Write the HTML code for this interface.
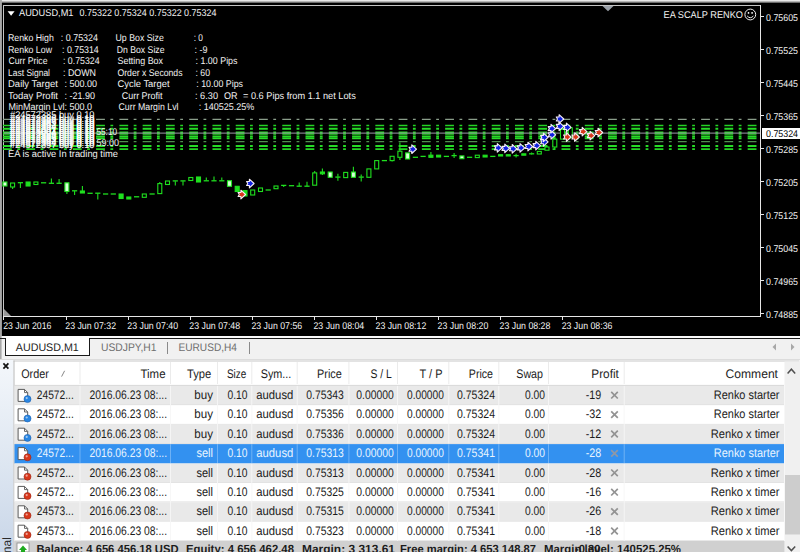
<!DOCTYPE html>
<html lang="en"><head><meta charset="utf-8"><title>AUDUSD,M1 - EA Scalp Renko</title>
<style>
html,body{margin:0;padding:0;background:#f0f0f0;}
body{width:800px;height:552px;overflow:hidden;position:relative;font-family:"Liberation Sans", sans-serif;}
svg text{white-space:pre;text-rendering:geometricPrecision;}
</style></head><body>
<svg width="800" height="552" viewBox="0 0 800 552" style="position:absolute;left:0;top:0;font-family:'Liberation Sans', sans-serif">
<rect x="0" y="0" width="800" height="552" fill="#f0f0f0"/>
<rect x="0" y="0" width="800" height="336" fill="#000"/>
<rect x="0" y="0" width="800" height="2.6" fill="#b4b4b4"/>
<rect x="0" y="0" width="800" height="1" fill="#e8e8e8"/>
<rect x="0" y="0" width="1.8" height="360" fill="#a8a8a8"/>
<g fill="#e6e6e6" shape-rendering="crispEdges">
<rect x="3" y="5" width="758" height="1" fill="#c4c4c4"/>
<rect x="3" y="5" width="1" height="311" fill="#c4c4c4"/>
<rect x="760" y="5" width="1" height="312"/>
<rect x="3" y="316" width="758" height="1"/>
<rect x="761" y="16" width="3" height="1"/>
<rect x="761" y="49" width="3" height="1"/>
<rect x="761" y="82" width="3" height="1"/>
<rect x="761" y="115" width="3" height="1"/>
<rect x="761" y="148" width="3" height="1"/>
<rect x="761" y="181" width="3" height="1"/>
<rect x="761" y="214" width="3" height="1"/>
<rect x="761" y="247" width="3" height="1"/>
<rect x="761" y="280" width="3" height="1"/>
<rect x="761" y="313" width="3" height="1"/>
<rect x="3" y="317" width="1" height="3"/>
<rect x="66" y="317" width="1" height="3"/>
<rect x="128" y="317" width="1" height="3"/>
<rect x="190" y="317" width="1" height="3"/>
<rect x="252" y="317" width="1" height="3"/>
<rect x="314" y="317" width="1" height="3"/>
<rect x="376" y="317" width="1" height="3"/>
<rect x="438" y="317" width="1" height="3"/>
<rect x="500" y="317" width="1" height="3"/>
<rect x="562" y="317" width="1" height="3"/>
</g>
<polygon points="4,309 4,316 11,316" fill="#9a9a9a"/>
<polygon points="602.5,6 613.5,6 608,11.2" fill="#9aa0a8"/>
<g fill="none" stroke-dasharray="8.8 5.5 2.8 6.17">
<path d="M3.03 119.4H760" stroke="#8a9e8a" stroke-width="1.1"/>
<path d="M3.03 125.5H760" stroke="#24d424" stroke-width="1.5"/>
<path d="M3.03 128.7H760" stroke="#26dc26" stroke-width="1.9"/>
<path d="M3.03 132.3H760" stroke="#26dc26" stroke-width="1.7"/>
<path d="M3.03 134.0H760" stroke="#26dc26" stroke-width="1.3"/>
<path d="M3.03 136.5H760" stroke="#26dc26" stroke-width="1.8"/>
<path d="M3.03 138.3H760" stroke="#26dc26" stroke-width="1.7"/>
<path d="M3.03 141.7H760" stroke="#4f8f4f" stroke-width="1.2"/>
<path d="M3.03 146.0H760" stroke="#26dc26" stroke-width="2.0"/>
<path d="M3.03 149.2H760" stroke="#24d424" stroke-width="1.8"/>
</g>
<rect x="4" y="132.6" width="756" height="1" fill="#9c9ca8"/>
<g stroke="#1fe01f" stroke-width="1.1" fill="none">
<rect x="2.9" y="182" width="4" height="4.0" fill="#d8ffd8"/>
<path d="M12.6 187V189"/>
<rect x="10.6" y="183" width="4" height="4.0" fill="#000"/>
<path d="M20.4 183V188"/>
<path d="M17.8 182.7H23.0" stroke-width="1.3"/>
<rect x="26.1" y="182" width="4" height="4.0" fill="#1fe01f"/>
<rect x="33.9" y="182" width="4" height="2.5" fill="#000"/>
<path d="M41.0 182.8H46.2" stroke-width="1.3"/>
<path d="M51.4 178.4V183"/>
<path d="M48.8 183.3H54.0" stroke-width="1.3"/>
<path d="M59.1 179V183"/>
<path d="M56.5 183.3H61.7" stroke-width="1.3"/>
<path d="M66.9 191.5V194"/>
<rect x="64.9" y="182.8" width="4" height="8.7" fill="#d8ffd8"/>
<path d="M74.6 191V195"/>
<path d="M72.0 190.8H77.2" stroke-width="1.3"/>
<path d="M82.4 186V191"/>
<rect x="80.4" y="191" width="4" height="2.0" fill="#1fe01f"/>
<path d="M87.5 193.3H92.7" stroke-width="1.3"/>
<path d="M97.8 193.5V199.4"/>
<path d="M95.2 193.2H100.4" stroke-width="1.3"/>
<path d="M103.0 194.0H108.2" stroke-width="1.3"/>
<path d="M110.7 194.0H115.9" stroke-width="1.3"/>
<rect x="119.1" y="194" width="4" height="4.5" fill="#1fe01f"/>
<rect x="126.8" y="197" width="4" height="2.0" fill="#1fe01f"/>
<path d="M134.0 196.8H139.2" stroke-width="1.3"/>
<rect x="142.3" y="194" width="4" height="3.3" fill="#000"/>
<path d="M149.5 194.0H154.7" stroke-width="1.3"/>
<path d="M159.8 182V183.6"/>
<rect x="157.8" y="183.6" width="4" height="10.0" fill="#000"/>
<rect x="165.5" y="181" width="4" height="3.5" fill="#000"/>
<path d="M175.3 181.2V185.4"/>
<path d="M172.7 180.9H177.9" stroke-width="1.3"/>
<path d="M183.0 181.2V185.4"/>
<path d="M180.4 180.9H185.6" stroke-width="1.3"/>
<rect x="188.8" y="177.5" width="4" height="3.0" fill="#000"/>
<rect x="196.5" y="177" width="4" height="5.0" fill="#1fe01f"/>
<path d="M206.3 177.5V180.6"/>
<path d="M203.7 180.8H208.9" stroke-width="1.3"/>
<path d="M214.0 176.6V180.6"/>
<path d="M211.4 180.8H216.6" stroke-width="1.3"/>
<path d="M221.8 177.5V180.6"/>
<path d="M219.2 180.8H224.4" stroke-width="1.3"/>
<rect x="227.5" y="180.7" width="4" height="5.6" fill="#d8ffd8"/>
<rect x="235.2" y="186.3" width="4" height="5.2" fill="#1fe01f"/>
<rect x="243.0" y="190.6" width="4" height="5.4" fill="#1fe01f"/>
<rect x="250.7" y="190" width="4" height="5.0" fill="#000"/>
<rect x="258.5" y="188" width="4" height="3.5" fill="#000"/>
<path d="M265.6 190.0H270.8" stroke-width="1.3"/>
<rect x="274.0" y="186" width="4" height="2.7" fill="#000"/>
<path d="M283.7 185.7V187"/>
<path d="M281.1 185.4H286.3" stroke-width="1.3"/>
<path d="M288.9 185.7H294.1" stroke-width="1.3"/>
<path d="M299.2 182.5V186"/>
<path d="M296.6 186.2H301.8" stroke-width="1.3"/>
<path d="M307.0 181.7V186"/>
<path d="M304.4 186.2H309.6" stroke-width="1.3"/>
<path d="M314.7 171V172.9"/>
<rect x="312.7" y="172.9" width="4" height="12.3" fill="#000"/>
<path d="M322.4 168.5V172"/>
<path d="M322.4 173.8V175"/>
<rect x="320.4" y="172" width="4" height="1.8" fill="#1fe01f"/>
<rect x="328.2" y="172" width="4" height="5.3" fill="#d8ffd8"/>
<path d="M337.9 173.8V176.8"/>
<path d="M337.9 177.3V180.8"/>
<path d="M335.3 177.1H340.5" stroke-width="1.3"/>
<rect x="343.7" y="172.4" width="4" height="5.2" fill="#000"/>
<path d="M353.4 166.8V172"/>
<rect x="351.4" y="172" width="4" height="5.3" fill="#d8ffd8"/>
<path d="M361.2 174.6V176.8"/>
<path d="M361.2 177.3V181.6"/>
<path d="M358.6 177.1H363.8" stroke-width="1.3"/>
<rect x="366.9" y="168.9" width="4" height="8.4" fill="#000"/>
<rect x="374.7" y="160.6" width="4" height="8.3" fill="#000"/>
<path d="M381.8 160.6H387.0" stroke-width="1.3"/>
<path d="M392.1 160.6V161.5"/>
<rect x="390.1" y="156.3" width="4" height="4.3" fill="#000"/>
<path d="M399.9 142.4V151.2"/>
<path d="M399.9 157.3V160"/>
<rect x="397.9" y="151.2" width="4" height="6.1" fill="#000"/>
<rect x="405.6" y="152.9" width="4" height="6.1" fill="#d8ffd8"/>
<path d="M412.8 157.3H418.0" stroke-width="1.3"/>
<path d="M420.5 156.4H425.7" stroke-width="1.3"/>
<path d="M430.9 152V155.2"/>
<rect x="428.9" y="155.2" width="4" height="2.1" fill="#1fe01f"/>
<rect x="436.6" y="155.2" width="4" height="1.8" fill="#1fe01f"/>
<path d="M443.8 156.4H449.0" stroke-width="1.3"/>
<path d="M454.1 152.9V155.3"/>
<path d="M454.1 155.8V158"/>
<path d="M451.5 155.6H456.7" stroke-width="1.3"/>
<rect x="459.9" y="155.9" width="4" height="2.8" fill="#d8ffd8"/>
<path d="M467.0 157.3H472.2" stroke-width="1.3"/>
<rect x="475.3" y="155.2" width="4" height="2.4" fill="#000"/>
<rect x="483.1" y="155.2" width="4" height="1.8" fill="#1fe01f"/>
<path d="M490.2 156.4H495.4" stroke-width="1.3"/>
<rect x="498.6" y="154.7" width="4" height="1.3" fill="#1fe01f"/>
<rect x="506.3" y="154.7" width="4" height="1.3" fill="#1fe01f"/>
<path d="M516.1 153.8V155.3"/>
<path d="M516.1 155.8V157.6"/>
<path d="M513.5 155.6H518.7" stroke-width="1.3"/>
<rect x="521.8" y="153.8" width="4" height="1.4" fill="#1fe01f"/>
<path d="M531.6 152.5V153.5"/>
<path d="M531.6 154V154.6"/>
<path d="M529.0 153.8H534.2" stroke-width="1.3"/>
<rect x="537.3" y="151.4" width="4" height="2.6" fill="#000"/>
<path d="M547.0 145.3V147"/>
<rect x="545.0" y="147" width="4" height="3.2" fill="#000"/>
<path d="M554.8 136.5V139.1"/>
<path d="M554.8 147V149.7"/>
<rect x="552.8" y="139.1" width="4" height="7.9" fill="#000"/>
<path d="M562.5 126V129.5"/>
<rect x="560.5" y="129.5" width="4" height="9.6" fill="#000"/>
<rect x="568.3" y="127.8" width="4" height="9.6" fill="#000"/>
</g>
<polygon points="238.1,192.5 240.9,192.5 240.9,190.2 245.6,194.5 240.9,198.8 240.9,196.5 238.1,196.5 239.3,194.5" fill="#d8381c" stroke="#f6eef6" stroke-width="1.1" stroke-linejoin="round"/>
<polygon points="246.6,181.5 249.4,181.5 249.4,179.2 254.1,183.5 249.4,187.8 249.4,185.5 246.6,185.5 247.8,183.5" fill="#1020e0" stroke="#f6eef6" stroke-width="1.1" stroke-linejoin="round"/>
<polygon points="409.0,147.2 411.8,147.2 411.8,144.9 416.5,149.2 411.8,153.5 411.8,151.2 409.0,151.2 410.2,149.2" fill="#1020e0" stroke="#f6eef6" stroke-width="1.1" stroke-linejoin="round"/>
<polygon points="494.5,145.9 497.3,145.9 497.3,143.6 502.0,147.9 497.3,152.2 497.3,149.9 494.5,149.9 495.7,147.9" fill="#1020e0" stroke="#f6eef6" stroke-width="1.1" stroke-linejoin="round"/>
<polygon points="502.0,146.4 504.8,146.4 504.8,144.1 509.5,148.4 504.8,152.7 504.8,150.4 502.0,150.4 503.2,148.4" fill="#1020e0" stroke="#f6eef6" stroke-width="1.1" stroke-linejoin="round"/>
<polygon points="509.4,146.8 512.2,146.8 512.2,144.5 516.9,148.8 512.2,153.1 512.2,150.8 509.4,150.8 510.6,148.8" fill="#1020e0" stroke="#f6eef6" stroke-width="1.1" stroke-linejoin="round"/>
<polygon points="517.2,145.9 520.0,145.9 520.0,143.6 524.7,147.9 520.0,152.2 520.0,149.9 517.2,149.9 518.4,147.9" fill="#1020e0" stroke="#f6eef6" stroke-width="1.1" stroke-linejoin="round"/>
<polygon points="525.1,144.5 527.9,144.5 527.9,142.2 532.6,146.5 527.9,150.8 527.9,148.5 525.1,148.5 526.3,146.5" fill="#1020e0" stroke="#f6eef6" stroke-width="1.1" stroke-linejoin="round"/>
<polygon points="533.0,143.6 535.8,143.6 535.8,141.3 540.5,145.6 535.8,149.9 535.8,147.6 533.0,147.6 534.2,145.6" fill="#1020e0" stroke="#f6eef6" stroke-width="1.1" stroke-linejoin="round"/>
<polygon points="540.6,139.8 543.4,139.8 543.4,137.5 548.1,141.8 543.4,146.1 543.4,143.8 540.6,143.8 541.8,141.8" fill="#1020e0" stroke="#f6eef6" stroke-width="1.1" stroke-linejoin="round"/>
<polygon points="540.6,135.4 543.4,135.4 543.4,133.1 548.1,137.4 543.4,141.7 543.4,139.4 540.6,139.4 541.8,137.4" fill="#1020e0" stroke="#f6eef6" stroke-width="1.1" stroke-linejoin="round"/>
<polygon points="548.2,132.8 551.0,132.8 551.0,130.5 555.7,134.8 551.0,139.1 551.0,136.8 548.2,136.8 549.4,134.8" fill="#1020e0" stroke="#f6eef6" stroke-width="1.1" stroke-linejoin="round"/>
<polygon points="548.2,126.6 551.0,126.6 551.0,124.3 555.7,128.6 551.0,132.9 551.0,130.6 548.2,130.6 549.4,128.6" fill="#1020e0" stroke="#f6eef6" stroke-width="1.1" stroke-linejoin="round"/>
<polygon points="556.3,124.4 559.1,124.4 559.1,122.1 563.8,126.4 559.1,130.7 559.1,128.4 556.3,128.4 557.5,126.4" fill="#1020e0" stroke="#f6eef6" stroke-width="1.1" stroke-linejoin="round"/>
<polygon points="556.3,117.0 559.1,117.0 559.1,114.7 563.8,119.0 559.1,123.3 559.1,121.0 556.3,121.0 557.5,119.0" fill="#1020e0" stroke="#f6eef6" stroke-width="1.1" stroke-linejoin="round"/>
<polygon points="563.6,125.4 566.4,125.4 566.4,123.1 571.1,127.4 566.4,131.7 566.4,129.4 563.6,129.4 564.8,127.4" fill="#1020e0" stroke="#f6eef6" stroke-width="1.1" stroke-linejoin="round"/>
<polygon points="563.6,135.0 566.4,135.0 566.4,132.7 571.1,137.0 566.4,141.3 566.4,139.0 563.6,139.0 564.8,137.0" fill="#d8381c" stroke="#f6eef6" stroke-width="1.1" stroke-linejoin="round"/>
<polygon points="571.9,135.0 574.7,135.0 574.7,132.7 579.4,137.0 574.7,141.3 574.7,139.0 571.9,139.0 573.1,137.0" fill="#d8381c" stroke="#f6eef6" stroke-width="1.1" stroke-linejoin="round"/>
<polygon points="579.4,129.6 582.2,129.6 582.2,127.3 586.9,131.6 582.2,135.9 582.2,133.6 579.4,133.6 580.6,131.6" fill="#d8381c" stroke="#f6eef6" stroke-width="1.1" stroke-linejoin="round"/>
<polygon points="587.3,133.6 590.1,133.6 590.1,131.3 594.8,135.6 590.1,139.9 590.1,137.6 587.3,137.6 588.5,135.6" fill="#d8381c" stroke="#f6eef6" stroke-width="1.1" stroke-linejoin="round"/>
<polygon points="595.2,130.5 598.0,130.5 598.0,128.2 602.7,132.5 598.0,136.8 598.0,134.5 595.2,134.5 596.4,132.5" fill="#d8381c" stroke="#f6eef6" stroke-width="1.1" stroke-linejoin="round"/>
<polygon points="7.6,11.2 14.6,11.2 11.1,15.7" fill="#fff"/>
<text x="19.00" y="16" font-size="9.8" fill="#f2f2f2" textLength="54.50" lengthAdjust="spacingAndGlyphs" xml:space="preserve">AUDUSD,M1</text>
<text x="79.50" y="16" font-size="9.8" fill="#f2f2f2" textLength="137.00" lengthAdjust="spacingAndGlyphs" xml:space="preserve">0.75322 0.75324 0.75322 0.75324</text>
<text x="663.50" y="18" font-size="9.8" fill="#f2f2f2" textLength="79.50" lengthAdjust="spacingAndGlyphs" xml:space="preserve">EA SCALP RENKO</text>
<g fill="none" stroke="#f2f2f2" stroke-width="1"><circle cx="750.3" cy="14.5" r="5.4"/><path d="M747.2 16Q750.3 19.4 753.4 16"/></g>
<rect x="747.8" y="12" width="1.4" height="1.8" fill="#f2f2f2"/><rect x="751.4" y="12" width="1.4" height="1.8" fill="#f2f2f2"/>
<text x="8.00" y="41" font-size="9.8" fill="#f2f2f2" textLength="45.80" lengthAdjust="spacingAndGlyphs" xml:space="preserve">Renko High</text>
<text x="60.75" y="41" font-size="9.8" fill="#f2f2f2" textLength="37.25" lengthAdjust="spacingAndGlyphs" xml:space="preserve">: 0.75324</text>
<text x="115.50" y="41" font-size="9.8" fill="#f2f2f2" textLength="48.30" lengthAdjust="spacingAndGlyphs" xml:space="preserve">Up Box Size</text>
<text x="193.75" y="41" font-size="9.8" fill="#f2f2f2" textLength="9.25" lengthAdjust="spacingAndGlyphs" xml:space="preserve">: 0</text>
<text x="8.00" y="53" font-size="9.8" fill="#f2f2f2" textLength="44.00" lengthAdjust="spacingAndGlyphs" xml:space="preserve">Renko Low</text>
<text x="62.00" y="53" font-size="9.8" fill="#f2f2f2" textLength="36.75" lengthAdjust="spacingAndGlyphs" xml:space="preserve">: 0.75314</text>
<text x="116.75" y="53" font-size="9.8" fill="#f2f2f2" textLength="47.75" lengthAdjust="spacingAndGlyphs" xml:space="preserve">Dn Box Size</text>
<text x="194.50" y="53" font-size="9.8" fill="#f2f2f2" textLength="13.00" lengthAdjust="spacingAndGlyphs" xml:space="preserve">: -9</text>
<text x="8.50" y="64" font-size="9.8" fill="#f2f2f2" textLength="39.00" lengthAdjust="spacingAndGlyphs" xml:space="preserve">Curr Price</text>
<text x="63.00" y="64" font-size="9.8" fill="#f2f2f2" textLength="36.50" lengthAdjust="spacingAndGlyphs" xml:space="preserve">: 0.75324</text>
<text x="117.50" y="64" font-size="9.8" fill="#f2f2f2" textLength="45.50" lengthAdjust="spacingAndGlyphs" xml:space="preserve">Setting Box</text>
<text x="195.50" y="64" font-size="9.8" fill="#f2f2f2" textLength="42.00" lengthAdjust="spacingAndGlyphs" xml:space="preserve">: 1.00 Pips</text>
<text x="8.00" y="76" font-size="9.8" fill="#f2f2f2" textLength="42.00" lengthAdjust="spacingAndGlyphs" xml:space="preserve">Last Signal</text>
<text x="63.00" y="76" font-size="9.8" fill="#f2f2f2" textLength="33.00" lengthAdjust="spacingAndGlyphs" xml:space="preserve">: DOWN</text>
<text x="117.50" y="76" font-size="9.8" fill="#f2f2f2" textLength="65.00" lengthAdjust="spacingAndGlyphs" xml:space="preserve">Order x Seconds</text>
<text x="195.50" y="76" font-size="9.8" fill="#f2f2f2" textLength="14.50" lengthAdjust="spacingAndGlyphs" xml:space="preserve">: 60</text>
<text x="8.00" y="87" font-size="9.8" fill="#f2f2f2" textLength="50.00" lengthAdjust="spacingAndGlyphs" xml:space="preserve">Daily Target</text>
<text x="64.50" y="87" font-size="9.8" fill="#f2f2f2" textLength="32.50" lengthAdjust="spacingAndGlyphs" xml:space="preserve">: 500.00</text>
<text x="117.50" y="87" font-size="9.8" fill="#f2f2f2" textLength="52.00" lengthAdjust="spacingAndGlyphs" xml:space="preserve">Cycle Target</text>
<text x="196.25" y="87" font-size="9.8" fill="#f2f2f2" textLength="46.75" lengthAdjust="spacingAndGlyphs" xml:space="preserve">: 10.00 Pips</text>
<text x="8.00" y="99" font-size="9.8" fill="#f2f2f2" textLength="50.00" lengthAdjust="spacingAndGlyphs" xml:space="preserve">Today Profit</text>
<text x="64.50" y="99" font-size="9.8" fill="#f2f2f2" textLength="30.50" lengthAdjust="spacingAndGlyphs" xml:space="preserve">: -21.90</text>
<text x="121.75" y="99" font-size="9.8" fill="#f2f2f2" textLength="40.75" lengthAdjust="spacingAndGlyphs" xml:space="preserve">Curr Profit</text>
<text x="195.00" y="99" font-size="9.8" fill="#f2f2f2" textLength="23.00" lengthAdjust="spacingAndGlyphs" xml:space="preserve">: 6.30</text>
<text x="224.00" y="99" font-size="9.8" fill="#f2f2f2" textLength="13.50" lengthAdjust="spacingAndGlyphs" xml:space="preserve">OR</text>
<text x="243.00" y="99" font-size="9.8" fill="#f2f2f2" textLength="112.75" lengthAdjust="spacingAndGlyphs" xml:space="preserve">= 0.6 Pips from 1.1 net Lots</text>
<text x="8.50" y="110" font-size="9.8" fill="#f2f2f2" textLength="83.50" lengthAdjust="spacingAndGlyphs" xml:space="preserve">MinMargin Lvl: 500.0</text>
<text x="118.50" y="110" font-size="9.8" fill="#f2f2f2" textLength="60.00" lengthAdjust="spacingAndGlyphs" xml:space="preserve">Curr Margin Lvl</text>
<text x="198.75" y="110" font-size="9.8" fill="#f2f2f2" textLength="55.50" lengthAdjust="spacingAndGlyphs" xml:space="preserve">: 140525.25%</text>
<text x="10.00" y="118" font-size="9.8" fill="#ffffff" textLength="84.50" lengthAdjust="spacingAndGlyphs" xml:space="preserve">#24572385 buy 0.10</text>
<text x="10.00" y="122" font-size="9.8" fill="#ffffff" textLength="84.50" lengthAdjust="spacingAndGlyphs" xml:space="preserve" stroke="#fff" stroke-width="0.15">#24572386 buy 0.10</text>
<text x="10.00" y="124" font-size="9.8" fill="#ffffff" textLength="84.50" lengthAdjust="spacingAndGlyphs" xml:space="preserve" stroke="#fff" stroke-width="0.15">#24572387 buy 0.10</text>
<text x="10.00" y="126" font-size="9.8" fill="#ffffff" textLength="84.50" lengthAdjust="spacingAndGlyphs" xml:space="preserve" stroke="#fff" stroke-width="0.15">#24572389 buy 0.10</text>
<text x="10.00" y="128" font-size="9.8" fill="#ffffff" textLength="84.50" lengthAdjust="spacingAndGlyphs" xml:space="preserve" stroke="#fff" stroke-width="0.15">#24572392 buy 0.10</text>
<text x="10.00" y="130" font-size="9.8" fill="#ffffff" textLength="84.50" lengthAdjust="spacingAndGlyphs" xml:space="preserve" stroke="#fff" stroke-width="0.15">#24572394 buy 0.10</text>
<text x="10.00" y="132" font-size="9.8" fill="#ffffff" textLength="84.50" lengthAdjust="spacingAndGlyphs" xml:space="preserve" stroke="#fff" stroke-width="0.15">#24572397 buy 0.10</text>
<text x="10.00" y="134" font-size="9.8" fill="#ffffff" textLength="84.50" lengthAdjust="spacingAndGlyphs" xml:space="preserve" stroke="#fff" stroke-width="0.15">#24573001 buy 0.10</text>
<text x="10.00" y="136" font-size="9.8" fill="#ffffff" textLength="84.50" lengthAdjust="spacingAndGlyphs" xml:space="preserve" stroke="#fff" stroke-width="0.15">#24573004 buy 0.10</text>
<text x="10.00" y="138" font-size="9.8" fill="#ffffff" textLength="84.50" lengthAdjust="spacingAndGlyphs" xml:space="preserve" stroke="#fff" stroke-width="0.15">#24572386 buy 0.10</text>
<text x="10.00" y="140" font-size="9.8" fill="#ffffff" textLength="84.50" lengthAdjust="spacingAndGlyphs" xml:space="preserve" stroke="#fff" stroke-width="0.15">#24572387 buy 0.10</text>
<text x="10.00" y="142" font-size="9.8" fill="#ffffff" textLength="84.50" lengthAdjust="spacingAndGlyphs" xml:space="preserve" stroke="#fff" stroke-width="0.15">#24572389 buy 0.10</text>
<text x="10.00" y="144" font-size="9.8" fill="#ffffff" textLength="84.50" lengthAdjust="spacingAndGlyphs" xml:space="preserve" stroke="#fff" stroke-width="0.15">#24572392 buy 0.10</text>
<text x="10.00" y="146" font-size="9.8" fill="#ffffff" textLength="84.50" lengthAdjust="spacingAndGlyphs" xml:space="preserve" stroke="#fff" stroke-width="0.15">#24572394 buy 0.10</text>
<text x="10.00" y="148" font-size="9.8" fill="#ffffff" textLength="84.50" lengthAdjust="spacingAndGlyphs" xml:space="preserve" stroke="#fff" stroke-width="0.15">#24572397 buy 0.10</text>
<text x="96.50" y="135" font-size="9.8" fill="#f2f2f2" textLength="20.50" lengthAdjust="spacingAndGlyphs" xml:space="preserve">55:10</text>
<text x="96.50" y="146" font-size="9.8" fill="#f2f2f2" textLength="22.50" lengthAdjust="spacingAndGlyphs" xml:space="preserve">59:00</text>
<text x="8.00" y="157" font-size="9.8" fill="#f2f2f2" textLength="110.00" lengthAdjust="spacingAndGlyphs" xml:space="preserve">EA is active In trading time</text>
<text x="766.00" y="21" font-size="9.8" fill="#f2f2f2" textLength="32.00" lengthAdjust="spacingAndGlyphs" xml:space="preserve">0.75605</text>
<text x="766.00" y="54" font-size="9.8" fill="#f2f2f2" textLength="32.00" lengthAdjust="spacingAndGlyphs" xml:space="preserve">0.75525</text>
<text x="766.00" y="87" font-size="9.8" fill="#f2f2f2" textLength="32.00" lengthAdjust="spacingAndGlyphs" xml:space="preserve">0.75445</text>
<text x="766.00" y="120" font-size="9.8" fill="#f2f2f2" textLength="32.00" lengthAdjust="spacingAndGlyphs" xml:space="preserve">0.75365</text>
<text x="766.00" y="153" font-size="9.8" fill="#f2f2f2" textLength="32.00" lengthAdjust="spacingAndGlyphs" xml:space="preserve">0.75285</text>
<text x="766.00" y="186" font-size="9.8" fill="#f2f2f2" textLength="32.00" lengthAdjust="spacingAndGlyphs" xml:space="preserve">0.75205</text>
<text x="766.00" y="219" font-size="9.8" fill="#f2f2f2" textLength="32.00" lengthAdjust="spacingAndGlyphs" xml:space="preserve">0.75125</text>
<text x="766.00" y="252" font-size="9.8" fill="#f2f2f2" textLength="32.00" lengthAdjust="spacingAndGlyphs" xml:space="preserve">0.75045</text>
<text x="766.00" y="285" font-size="9.8" fill="#f2f2f2" textLength="32.00" lengthAdjust="spacingAndGlyphs" xml:space="preserve">0.74965</text>
<text x="766.00" y="318" font-size="9.8" fill="#f2f2f2" textLength="32.00" lengthAdjust="spacingAndGlyphs" xml:space="preserve">0.74885</text>
<rect x="762" y="128" width="38" height="11" fill="#fff"/>
<text x="766.00" y="137" font-size="9.8" fill="#000" textLength="32.00" lengthAdjust="spacingAndGlyphs" xml:space="preserve">0.75324</text>
<text x="3.20" y="329" font-size="9.8" fill="#f2f2f2" textLength="48.20" lengthAdjust="spacingAndGlyphs" xml:space="preserve">23 Jun 2016</text>
<text x="65.25" y="329" font-size="9.8" fill="#f2f2f2" textLength="50.80" lengthAdjust="spacingAndGlyphs" xml:space="preserve">23 Jun 07:32</text>
<text x="127.30" y="329" font-size="9.8" fill="#f2f2f2" textLength="50.80" lengthAdjust="spacingAndGlyphs" xml:space="preserve">23 Jun 07:40</text>
<text x="189.35" y="329" font-size="9.8" fill="#f2f2f2" textLength="50.80" lengthAdjust="spacingAndGlyphs" xml:space="preserve">23 Jun 07:48</text>
<text x="251.40" y="329" font-size="9.8" fill="#f2f2f2" textLength="50.80" lengthAdjust="spacingAndGlyphs" xml:space="preserve">23 Jun 07:56</text>
<text x="313.45" y="329" font-size="9.8" fill="#f2f2f2" textLength="50.80" lengthAdjust="spacingAndGlyphs" xml:space="preserve">23 Jun 08:04</text>
<text x="375.50" y="329" font-size="9.8" fill="#f2f2f2" textLength="50.80" lengthAdjust="spacingAndGlyphs" xml:space="preserve">23 Jun 08:12</text>
<text x="437.55" y="329" font-size="9.8" fill="#f2f2f2" textLength="50.80" lengthAdjust="spacingAndGlyphs" xml:space="preserve">23 Jun 08:20</text>
<text x="499.60" y="329" font-size="9.8" fill="#f2f2f2" textLength="50.80" lengthAdjust="spacingAndGlyphs" xml:space="preserve">23 Jun 08:28</text>
<text x="561.65" y="329" font-size="9.8" fill="#f2f2f2" textLength="50.80" lengthAdjust="spacingAndGlyphs" xml:space="preserve">23 Jun 08:36</text>
<rect x="0" y="336" width="800" height="24" fill="#f1f1f1"/>
<rect x="0" y="336" width="800" height="2" fill="#fafafa"/>
<rect x="0" y="0" width="1.6" height="360" fill="#a8a8a8"/>
<g fill="#1a1a1a" shape-rendering="crispEdges">
<rect x="0" y="338" width="6" height="1.3"/>
<rect x="89" y="338" width="711" height="1.3"/>
</g>
<rect x="6" y="336" width="83" height="19" fill="#fff"/>
<g fill="#1a1a1a" shape-rendering="crispEdges"><rect x="5" y="338" width="1.3" height="18"/><rect x="89" y="338" width="1.3" height="18"/><rect x="5" y="355" width="85.3" height="1.3"/></g>
<text x="15.80" y="351" font-size="11" fill="#1a1a1a" textLength="63.00" lengthAdjust="spacingAndGlyphs" xml:space="preserve">AUDUSD,M1</text>
<text x="101.00" y="351" font-size="11" fill="#6e6e6e" textLength="55.50" lengthAdjust="spacingAndGlyphs" xml:space="preserve">USDJPY,H1</text>
<text x="178.50" y="351" font-size="11" fill="#6e6e6e" textLength="58.50" lengthAdjust="spacingAndGlyphs" xml:space="preserve">EURUSD,H4</text>
<rect x="167" y="342" width="1" height="12" fill="#8a8a8a"/><rect x="249" y="342" width="1" height="12" fill="#8a8a8a"/>
<polygon points="776,343.5 776,350.5 772.5,347" fill="#a8a8a8"/><polygon points="791,343.5 791,350.5 794.5,347" fill="#a8a8a8"/>
<rect x="0" y="359" width="800" height="1" fill="#dcdcdc"/>
<rect x="0" y="360" width="800" height="192" fill="#fff"/>
<defs><linearGradient id="ls" x1="0" y1="0" x2="0" y2="1"><stop offset="0" stop-color="#f4f7fb"/><stop offset="0.55" stop-color="#dde6f1"/><stop offset="1" stop-color="#c9d6e8"/></linearGradient></defs>
<rect x="0" y="360" width="13.5" height="192" fill="url(#ls)"/>
<path d="M3.4 363.4L8.4 368.6M8.4 363.4L3.4 368.6" stroke="#111" stroke-width="1.7"/>
<rect x="13.5" y="360.5" width="786" height="1" fill="#c8c8c8"/><rect x="13.5" y="360.5" width="1" height="192" fill="#b8b8b8"/>
<rect x="14.5" y="385.9" width="769.5" height="19.4" fill="#e9e9e9"/>
<rect x="14.5" y="404.5" width="769.5" height="0.8" fill="#dedede"/>
<rect x="14.5" y="405.3" width="769.5" height="19.4" fill="#ffffff"/>
<rect x="14.5" y="423.9" width="769.5" height="0.8" fill="#dedede"/>
<rect x="14.5" y="424.7" width="769.5" height="19.4" fill="#e9e9e9"/>
<rect x="14.5" y="443.3" width="769.5" height="0.8" fill="#dedede"/>
<rect x="14.5" y="444.1" width="769.5" height="19.4" fill="#3391f0"/>
<rect x="14.5" y="463.5" width="769.5" height="19.4" fill="#e9e9e9"/>
<rect x="14.5" y="482.1" width="769.5" height="0.8" fill="#dedede"/>
<rect x="14.5" y="482.9" width="769.5" height="19.4" fill="#ffffff"/>
<rect x="14.5" y="501.5" width="769.5" height="0.8" fill="#dedede"/>
<rect x="14.5" y="502.3" width="769.5" height="19.4" fill="#e9e9e9"/>
<rect x="14.5" y="520.9" width="769.5" height="0.8" fill="#dedede"/>
<rect x="14.5" y="521.7" width="769.5" height="19.4" fill="#ffffff"/>
<rect x="14.5" y="540.3" width="769.5" height="0.8" fill="#dedede"/>
<rect x="14.5" y="384.9" width="769.5" height="1" fill="#d8d8d8"/>
<rect x="79.5" y="362" width="1" height="22" fill="#ebebeb"/>
<rect x="79.5" y="385.9" width="1" height="57.6" fill="#f6f6f6" opacity="0.9"/>
<rect x="79.5" y="444.1" width="1" height="19.4" fill="#7db9f6" opacity="0.8"/>
<rect x="79.5" y="463.5" width="1" height="77.4" fill="#f6f6f6" opacity="0.9"/>
<rect x="170" y="362" width="1" height="22" fill="#ebebeb"/>
<rect x="170" y="385.9" width="1" height="57.6" fill="#f6f6f6" opacity="0.9"/>
<rect x="170" y="444.1" width="1" height="19.4" fill="#7db9f6" opacity="0.8"/>
<rect x="170" y="463.5" width="1" height="77.4" fill="#f6f6f6" opacity="0.9"/>
<rect x="217" y="362" width="1" height="22" fill="#ebebeb"/>
<rect x="217" y="385.9" width="1" height="57.6" fill="#f6f6f6" opacity="0.9"/>
<rect x="217" y="444.1" width="1" height="19.4" fill="#7db9f6" opacity="0.8"/>
<rect x="217" y="463.5" width="1" height="77.4" fill="#f6f6f6" opacity="0.9"/>
<rect x="251.3" y="362" width="1" height="22" fill="#ebebeb"/>
<rect x="251.3" y="385.9" width="1" height="57.6" fill="#f6f6f6" opacity="0.9"/>
<rect x="251.3" y="444.1" width="1" height="19.4" fill="#7db9f6" opacity="0.8"/>
<rect x="251.3" y="463.5" width="1" height="77.4" fill="#f6f6f6" opacity="0.9"/>
<rect x="296.7" y="362" width="1" height="22" fill="#ebebeb"/>
<rect x="296.7" y="385.9" width="1" height="57.6" fill="#f6f6f6" opacity="0.9"/>
<rect x="296.7" y="444.1" width="1" height="19.4" fill="#7db9f6" opacity="0.8"/>
<rect x="296.7" y="463.5" width="1" height="77.4" fill="#f6f6f6" opacity="0.9"/>
<rect x="348.4" y="362" width="1" height="22" fill="#ebebeb"/>
<rect x="348.4" y="385.9" width="1" height="57.6" fill="#f6f6f6" opacity="0.9"/>
<rect x="348.4" y="444.1" width="1" height="19.4" fill="#7db9f6" opacity="0.8"/>
<rect x="348.4" y="463.5" width="1" height="77.4" fill="#f6f6f6" opacity="0.9"/>
<rect x="397" y="362" width="1" height="22" fill="#ebebeb"/>
<rect x="397" y="385.9" width="1" height="57.6" fill="#f6f6f6" opacity="0.9"/>
<rect x="397" y="444.1" width="1" height="19.4" fill="#7db9f6" opacity="0.8"/>
<rect x="397" y="463.5" width="1" height="77.4" fill="#f6f6f6" opacity="0.9"/>
<rect x="448.3" y="362" width="1" height="22" fill="#ebebeb"/>
<rect x="448.3" y="385.9" width="1" height="57.6" fill="#f6f6f6" opacity="0.9"/>
<rect x="448.3" y="444.1" width="1" height="19.4" fill="#7db9f6" opacity="0.8"/>
<rect x="448.3" y="463.5" width="1" height="77.4" fill="#f6f6f6" opacity="0.9"/>
<rect x="498.3" y="362" width="1" height="22" fill="#ebebeb"/>
<rect x="498.3" y="385.9" width="1" height="57.6" fill="#f6f6f6" opacity="0.9"/>
<rect x="498.3" y="444.1" width="1" height="19.4" fill="#7db9f6" opacity="0.8"/>
<rect x="498.3" y="463.5" width="1" height="77.4" fill="#f6f6f6" opacity="0.9"/>
<rect x="548" y="362" width="1" height="22" fill="#ebebeb"/>
<rect x="548" y="385.9" width="1" height="57.6" fill="#f6f6f6" opacity="0.9"/>
<rect x="548" y="444.1" width="1" height="19.4" fill="#7db9f6" opacity="0.8"/>
<rect x="548" y="463.5" width="1" height="77.4" fill="#f6f6f6" opacity="0.9"/>
<rect x="623.7" y="362" width="1" height="22" fill="#ebebeb"/>
<rect x="623.7" y="385.9" width="1" height="57.6" fill="#f6f6f6" opacity="0.9"/>
<rect x="623.7" y="444.1" width="1" height="19.4" fill="#7db9f6" opacity="0.8"/>
<rect x="623.7" y="463.5" width="1" height="77.4" fill="#f6f6f6" opacity="0.9"/>
<rect x="784.5" y="361.5" width="15.5" height="190.5" fill="#f0f0f0"/>
<rect x="785" y="475" width="15" height="59.5" fill="#cdcdcd"/>
<path d="M787.6 373.4L791.4 369.2L795.2 373.4" fill="none" stroke="#505050" stroke-width="1.5"/>
<path d="M787.6 546.4L791.4 550.6L795.2 546.4" fill="none" stroke="#505050" stroke-width="1.5"/>
<text x="21.20" y="378" font-size="12.4" fill="#1c1c1c" textLength="27.60" lengthAdjust="spacingAndGlyphs" xml:space="preserve">Order</text>
<path d="M61.6 376.6L64.6 370.8" stroke="#777" stroke-width="0.9"/>
<text x="140.50" y="378" font-size="12.4" fill="#1c1c1c" textLength="25.00" lengthAdjust="spacingAndGlyphs" xml:space="preserve">Time</text>
<text x="187.00" y="378" font-size="12.4" fill="#1c1c1c" textLength="24.30" lengthAdjust="spacingAndGlyphs" xml:space="preserve">Type</text>
<text x="227.00" y="378" font-size="12.4" fill="#1c1c1c" textLength="19.30" lengthAdjust="spacingAndGlyphs" xml:space="preserve">Size</text>
<text x="260.70" y="378" font-size="12.4" fill="#1c1c1c" textLength="30.60" lengthAdjust="spacingAndGlyphs" xml:space="preserve">Sym...</text>
<text x="317.00" y="378" font-size="12.4" fill="#1c1c1c" textLength="24.80" lengthAdjust="spacingAndGlyphs" xml:space="preserve">Price</text>
<text x="370.50" y="378" font-size="12.4" fill="#1c1c1c" textLength="21.30" lengthAdjust="spacingAndGlyphs" xml:space="preserve">S / L</text>
<text x="419.50" y="378" font-size="12.4" fill="#1c1c1c" textLength="23.00" lengthAdjust="spacingAndGlyphs" xml:space="preserve">T / P</text>
<text x="468.80" y="378" font-size="12.4" fill="#1c1c1c" textLength="24.20" lengthAdjust="spacingAndGlyphs" xml:space="preserve">Price</text>
<text x="516.30" y="378" font-size="12.4" fill="#1c1c1c" textLength="26.70" lengthAdjust="spacingAndGlyphs" xml:space="preserve">Swap</text>
<text x="591.30" y="378" font-size="12.4" fill="#1c1c1c" textLength="27.50" lengthAdjust="spacingAndGlyphs" xml:space="preserve">Profit</text>
<text x="725.50" y="378" font-size="12.4" fill="#1c1c1c" textLength="52.50" lengthAdjust="spacingAndGlyphs" xml:space="preserve">Comment</text>
<path d="M18.1 389.4h6.4l3.2 3.2v8.8h-9.6z" fill="#fff" stroke="#5a5a5a" stroke-width="1"/>
<path d="M24.5 389.4v3.2h3.2" fill="none" stroke="#5a5a5a" stroke-width="0.9"/>
<circle cx="27.5" cy="399.09999999999997" r="3.5" fill="#2a86e2" stroke="#1b5fae" stroke-width="0.6"/>
<circle cx="26.7" cy="398.09999999999997" r="1.1" fill="#fff" opacity="0.55"/>
<text x="36.80" y="399" font-size="12.4" fill="#1c1c1c" textLength="37.00" lengthAdjust="spacingAndGlyphs" xml:space="preserve">24572...</text>
<text x="89.50" y="399" font-size="12.4" fill="#1c1c1c" textLength="77.50" lengthAdjust="spacingAndGlyphs" xml:space="preserve">2016.06.23 08:...</text>
<text x="194.30" y="399" font-size="12.4" fill="#1c1c1c" textLength="18.70" lengthAdjust="spacingAndGlyphs" xml:space="preserve">buy</text>
<text x="227.50" y="399" font-size="12.4" fill="#1c1c1c" textLength="20.00" lengthAdjust="spacingAndGlyphs" xml:space="preserve">0.10</text>
<text x="256.30" y="399" font-size="12.4" fill="#1c1c1c" textLength="37.00" lengthAdjust="spacingAndGlyphs" xml:space="preserve">audusd</text>
<text x="306.30" y="399" font-size="12.4" fill="#1c1c1c" textLength="37.50" lengthAdjust="spacingAndGlyphs" xml:space="preserve">0.75343</text>
<text x="356.30" y="399" font-size="12.4" fill="#1c1c1c" textLength="37.50" lengthAdjust="spacingAndGlyphs" xml:space="preserve">0.00000</text>
<text x="407.00" y="399" font-size="12.4" fill="#1c1c1c" textLength="36.80" lengthAdjust="spacingAndGlyphs" xml:space="preserve">0.00000</text>
<text x="457.00" y="399" font-size="12.4" fill="#1c1c1c" textLength="38.00" lengthAdjust="spacingAndGlyphs" xml:space="preserve">0.75324</text>
<text x="525.00" y="399" font-size="12.4" fill="#1c1c1c" textLength="20.00" lengthAdjust="spacingAndGlyphs" xml:space="preserve">0.00</text>
<text x="585.80" y="399" font-size="12.4" fill="#1c1c1c" textLength="15.50" lengthAdjust="spacingAndGlyphs" xml:space="preserve">-19</text>
<path d="M611.2 391.9L617.8 398.5M617.8 391.9L611.2 398.5" stroke="#939393" stroke-width="1.7"/>
<text x="713.80" y="399" font-size="12.4" fill="#1c1c1c" textLength="65.70" lengthAdjust="spacingAndGlyphs" xml:space="preserve">Renko starter</text>
<path d="M18.1 408.79999999999995h6.4l3.2 3.2v8.8h-9.6z" fill="#fff" stroke="#5a5a5a" stroke-width="1"/>
<path d="M24.5 408.79999999999995v3.2h3.2" fill="none" stroke="#5a5a5a" stroke-width="0.9"/>
<circle cx="27.5" cy="418.49999999999994" r="3.5" fill="#2a86e2" stroke="#1b5fae" stroke-width="0.6"/>
<circle cx="26.7" cy="417.49999999999994" r="1.1" fill="#fff" opacity="0.55"/>
<text x="36.80" y="418" font-size="12.4" fill="#1c1c1c" textLength="37.00" lengthAdjust="spacingAndGlyphs" xml:space="preserve">24572...</text>
<text x="89.50" y="418" font-size="12.4" fill="#1c1c1c" textLength="77.50" lengthAdjust="spacingAndGlyphs" xml:space="preserve">2016.06.23 08:...</text>
<text x="194.30" y="418" font-size="12.4" fill="#1c1c1c" textLength="18.70" lengthAdjust="spacingAndGlyphs" xml:space="preserve">buy</text>
<text x="227.50" y="418" font-size="12.4" fill="#1c1c1c" textLength="20.00" lengthAdjust="spacingAndGlyphs" xml:space="preserve">0.10</text>
<text x="256.30" y="418" font-size="12.4" fill="#1c1c1c" textLength="37.00" lengthAdjust="spacingAndGlyphs" xml:space="preserve">audusd</text>
<text x="306.30" y="418" font-size="12.4" fill="#1c1c1c" textLength="37.50" lengthAdjust="spacingAndGlyphs" xml:space="preserve">0.75356</text>
<text x="356.30" y="418" font-size="12.4" fill="#1c1c1c" textLength="37.50" lengthAdjust="spacingAndGlyphs" xml:space="preserve">0.00000</text>
<text x="407.00" y="418" font-size="12.4" fill="#1c1c1c" textLength="36.80" lengthAdjust="spacingAndGlyphs" xml:space="preserve">0.00000</text>
<text x="457.00" y="418" font-size="12.4" fill="#1c1c1c" textLength="38.00" lengthAdjust="spacingAndGlyphs" xml:space="preserve">0.75324</text>
<text x="525.00" y="418" font-size="12.4" fill="#1c1c1c" textLength="20.00" lengthAdjust="spacingAndGlyphs" xml:space="preserve">0.00</text>
<text x="585.80" y="418" font-size="12.4" fill="#1c1c1c" textLength="15.50" lengthAdjust="spacingAndGlyphs" xml:space="preserve">-32</text>
<path d="M611.2 411.3L617.8 417.9M617.8 411.3L611.2 417.9" stroke="#939393" stroke-width="1.7"/>
<text x="713.80" y="418" font-size="12.4" fill="#1c1c1c" textLength="65.70" lengthAdjust="spacingAndGlyphs" xml:space="preserve">Renko starter</text>
<path d="M18.1 428.2h6.4l3.2 3.2v8.8h-9.6z" fill="#fff" stroke="#5a5a5a" stroke-width="1"/>
<path d="M24.5 428.2v3.2h3.2" fill="none" stroke="#5a5a5a" stroke-width="0.9"/>
<circle cx="27.5" cy="437.9" r="3.5" fill="#2a86e2" stroke="#1b5fae" stroke-width="0.6"/>
<circle cx="26.7" cy="436.9" r="1.1" fill="#fff" opacity="0.55"/>
<text x="36.80" y="438" font-size="12.4" fill="#1c1c1c" textLength="37.00" lengthAdjust="spacingAndGlyphs" xml:space="preserve">24572...</text>
<text x="89.50" y="438" font-size="12.4" fill="#1c1c1c" textLength="77.50" lengthAdjust="spacingAndGlyphs" xml:space="preserve">2016.06.23 08:...</text>
<text x="194.30" y="438" font-size="12.4" fill="#1c1c1c" textLength="18.70" lengthAdjust="spacingAndGlyphs" xml:space="preserve">buy</text>
<text x="227.50" y="438" font-size="12.4" fill="#1c1c1c" textLength="20.00" lengthAdjust="spacingAndGlyphs" xml:space="preserve">0.10</text>
<text x="256.30" y="438" font-size="12.4" fill="#1c1c1c" textLength="37.00" lengthAdjust="spacingAndGlyphs" xml:space="preserve">audusd</text>
<text x="306.30" y="438" font-size="12.4" fill="#1c1c1c" textLength="37.50" lengthAdjust="spacingAndGlyphs" xml:space="preserve">0.75336</text>
<text x="356.30" y="438" font-size="12.4" fill="#1c1c1c" textLength="37.50" lengthAdjust="spacingAndGlyphs" xml:space="preserve">0.00000</text>
<text x="407.00" y="438" font-size="12.4" fill="#1c1c1c" textLength="36.80" lengthAdjust="spacingAndGlyphs" xml:space="preserve">0.00000</text>
<text x="457.00" y="438" font-size="12.4" fill="#1c1c1c" textLength="38.00" lengthAdjust="spacingAndGlyphs" xml:space="preserve">0.75324</text>
<text x="525.00" y="438" font-size="12.4" fill="#1c1c1c" textLength="20.00" lengthAdjust="spacingAndGlyphs" xml:space="preserve">0.00</text>
<text x="585.80" y="438" font-size="12.4" fill="#1c1c1c" textLength="15.50" lengthAdjust="spacingAndGlyphs" xml:space="preserve">-12</text>
<path d="M611.2 430.7L617.8 437.3M617.8 430.7L611.2 437.3" stroke="#939393" stroke-width="1.7"/>
<text x="710.80" y="438" font-size="12.4" fill="#1c1c1c" textLength="68.70" lengthAdjust="spacingAndGlyphs" xml:space="preserve">Renko x timer</text>
<path d="M18.1 447.59999999999997h6.4l3.2 3.2v8.8h-9.6z" fill="#fff" stroke="#5a5a5a" stroke-width="1"/>
<path d="M24.5 447.59999999999997v3.2h3.2" fill="none" stroke="#5a5a5a" stroke-width="0.9"/>
<circle cx="27.5" cy="457.29999999999995" r="3.5" fill="#d8381c" stroke="#9c2410" stroke-width="0.6"/>
<circle cx="26.7" cy="456.29999999999995" r="1.1" fill="#fff" opacity="0.55"/>
<text x="36.80" y="457" font-size="12.4" fill="#e8f4ff" textLength="37.00" lengthAdjust="spacingAndGlyphs" xml:space="preserve">24572...</text>
<text x="89.50" y="457" font-size="12.4" fill="#e8f4ff" textLength="77.50" lengthAdjust="spacingAndGlyphs" xml:space="preserve">2016.06.23 08:...</text>
<text x="196.50" y="457" font-size="12.4" fill="#e8f4ff" textLength="16.50" lengthAdjust="spacingAndGlyphs" xml:space="preserve">sell</text>
<text x="227.50" y="457" font-size="12.4" fill="#e8f4ff" textLength="20.00" lengthAdjust="spacingAndGlyphs" xml:space="preserve">0.10</text>
<text x="256.30" y="457" font-size="12.4" fill="#e8f4ff" textLength="37.00" lengthAdjust="spacingAndGlyphs" xml:space="preserve">audusd</text>
<text x="306.30" y="457" font-size="12.4" fill="#e8f4ff" textLength="37.50" lengthAdjust="spacingAndGlyphs" xml:space="preserve">0.75313</text>
<text x="356.30" y="457" font-size="12.4" fill="#e8f4ff" textLength="37.50" lengthAdjust="spacingAndGlyphs" xml:space="preserve">0.00000</text>
<text x="407.00" y="457" font-size="12.4" fill="#e8f4ff" textLength="36.80" lengthAdjust="spacingAndGlyphs" xml:space="preserve">0.00000</text>
<text x="457.00" y="457" font-size="12.4" fill="#e8f4ff" textLength="38.00" lengthAdjust="spacingAndGlyphs" xml:space="preserve">0.75341</text>
<text x="525.00" y="457" font-size="12.4" fill="#e8f4ff" textLength="20.00" lengthAdjust="spacingAndGlyphs" xml:space="preserve">0.00</text>
<text x="585.80" y="457" font-size="12.4" fill="#e8f4ff" textLength="15.50" lengthAdjust="spacingAndGlyphs" xml:space="preserve">-28</text>
<path d="M611.2 450.1L617.8 456.7M617.8 450.1L611.2 456.7" stroke="#8f98a6" stroke-width="1.7"/>
<text x="713.80" y="457" font-size="12.4" fill="#e8f4ff" textLength="65.70" lengthAdjust="spacingAndGlyphs" xml:space="preserve">Renko starter</text>
<path d="M18.1 467.0h6.4l3.2 3.2v8.8h-9.6z" fill="#fff" stroke="#5a5a5a" stroke-width="1"/>
<path d="M24.5 467.0v3.2h3.2" fill="none" stroke="#5a5a5a" stroke-width="0.9"/>
<circle cx="27.5" cy="476.7" r="3.5" fill="#d8381c" stroke="#9c2410" stroke-width="0.6"/>
<circle cx="26.7" cy="475.7" r="1.1" fill="#fff" opacity="0.55"/>
<text x="36.80" y="477" font-size="12.4" fill="#1c1c1c" textLength="37.00" lengthAdjust="spacingAndGlyphs" xml:space="preserve">24572...</text>
<text x="89.50" y="477" font-size="12.4" fill="#1c1c1c" textLength="77.50" lengthAdjust="spacingAndGlyphs" xml:space="preserve">2016.06.23 08:...</text>
<text x="196.50" y="477" font-size="12.4" fill="#1c1c1c" textLength="16.50" lengthAdjust="spacingAndGlyphs" xml:space="preserve">sell</text>
<text x="227.50" y="477" font-size="12.4" fill="#1c1c1c" textLength="20.00" lengthAdjust="spacingAndGlyphs" xml:space="preserve">0.10</text>
<text x="256.30" y="477" font-size="12.4" fill="#1c1c1c" textLength="37.00" lengthAdjust="spacingAndGlyphs" xml:space="preserve">audusd</text>
<text x="306.30" y="477" font-size="12.4" fill="#1c1c1c" textLength="37.50" lengthAdjust="spacingAndGlyphs" xml:space="preserve">0.75313</text>
<text x="356.30" y="477" font-size="12.4" fill="#1c1c1c" textLength="37.50" lengthAdjust="spacingAndGlyphs" xml:space="preserve">0.00000</text>
<text x="407.00" y="477" font-size="12.4" fill="#1c1c1c" textLength="36.80" lengthAdjust="spacingAndGlyphs" xml:space="preserve">0.00000</text>
<text x="457.00" y="477" font-size="12.4" fill="#1c1c1c" textLength="38.00" lengthAdjust="spacingAndGlyphs" xml:space="preserve">0.75341</text>
<text x="525.00" y="477" font-size="12.4" fill="#1c1c1c" textLength="20.00" lengthAdjust="spacingAndGlyphs" xml:space="preserve">0.00</text>
<text x="585.80" y="477" font-size="12.4" fill="#1c1c1c" textLength="15.50" lengthAdjust="spacingAndGlyphs" xml:space="preserve">-28</text>
<path d="M611.2 469.5L617.8 476.1M617.8 469.5L611.2 476.1" stroke="#939393" stroke-width="1.7"/>
<text x="710.80" y="477" font-size="12.4" fill="#1c1c1c" textLength="68.70" lengthAdjust="spacingAndGlyphs" xml:space="preserve">Renko x timer</text>
<path d="M18.1 486.4h6.4l3.2 3.2v8.8h-9.6z" fill="#fff" stroke="#5a5a5a" stroke-width="1"/>
<path d="M24.5 486.4v3.2h3.2" fill="none" stroke="#5a5a5a" stroke-width="0.9"/>
<circle cx="27.5" cy="496.09999999999997" r="3.5" fill="#d8381c" stroke="#9c2410" stroke-width="0.6"/>
<circle cx="26.7" cy="495.09999999999997" r="1.1" fill="#fff" opacity="0.55"/>
<text x="36.80" y="496" font-size="12.4" fill="#1c1c1c" textLength="37.00" lengthAdjust="spacingAndGlyphs" xml:space="preserve">24572...</text>
<text x="89.50" y="496" font-size="12.4" fill="#1c1c1c" textLength="77.50" lengthAdjust="spacingAndGlyphs" xml:space="preserve">2016.06.23 08:...</text>
<text x="196.50" y="496" font-size="12.4" fill="#1c1c1c" textLength="16.50" lengthAdjust="spacingAndGlyphs" xml:space="preserve">sell</text>
<text x="227.50" y="496" font-size="12.4" fill="#1c1c1c" textLength="20.00" lengthAdjust="spacingAndGlyphs" xml:space="preserve">0.10</text>
<text x="256.30" y="496" font-size="12.4" fill="#1c1c1c" textLength="37.00" lengthAdjust="spacingAndGlyphs" xml:space="preserve">audusd</text>
<text x="306.30" y="496" font-size="12.4" fill="#1c1c1c" textLength="37.50" lengthAdjust="spacingAndGlyphs" xml:space="preserve">0.75325</text>
<text x="356.30" y="496" font-size="12.4" fill="#1c1c1c" textLength="37.50" lengthAdjust="spacingAndGlyphs" xml:space="preserve">0.00000</text>
<text x="407.00" y="496" font-size="12.4" fill="#1c1c1c" textLength="36.80" lengthAdjust="spacingAndGlyphs" xml:space="preserve">0.00000</text>
<text x="457.00" y="496" font-size="12.4" fill="#1c1c1c" textLength="38.00" lengthAdjust="spacingAndGlyphs" xml:space="preserve">0.75341</text>
<text x="525.00" y="496" font-size="12.4" fill="#1c1c1c" textLength="20.00" lengthAdjust="spacingAndGlyphs" xml:space="preserve">0.00</text>
<text x="585.80" y="496" font-size="12.4" fill="#1c1c1c" textLength="15.50" lengthAdjust="spacingAndGlyphs" xml:space="preserve">-16</text>
<path d="M611.2 488.9L617.8 495.5M617.8 488.9L611.2 495.5" stroke="#939393" stroke-width="1.7"/>
<text x="710.80" y="496" font-size="12.4" fill="#1c1c1c" textLength="68.70" lengthAdjust="spacingAndGlyphs" xml:space="preserve">Renko x timer</text>
<path d="M18.1 505.79999999999995h6.4l3.2 3.2v8.8h-9.6z" fill="#fff" stroke="#5a5a5a" stroke-width="1"/>
<path d="M24.5 505.79999999999995v3.2h3.2" fill="none" stroke="#5a5a5a" stroke-width="0.9"/>
<circle cx="27.5" cy="515.5" r="3.5" fill="#d8381c" stroke="#9c2410" stroke-width="0.6"/>
<circle cx="26.7" cy="514.5" r="1.1" fill="#fff" opacity="0.55"/>
<text x="36.80" y="515" font-size="12.4" fill="#1c1c1c" textLength="37.00" lengthAdjust="spacingAndGlyphs" xml:space="preserve">24573...</text>
<text x="89.50" y="515" font-size="12.4" fill="#1c1c1c" textLength="77.50" lengthAdjust="spacingAndGlyphs" xml:space="preserve">2016.06.23 08:...</text>
<text x="196.50" y="515" font-size="12.4" fill="#1c1c1c" textLength="16.50" lengthAdjust="spacingAndGlyphs" xml:space="preserve">sell</text>
<text x="227.50" y="515" font-size="12.4" fill="#1c1c1c" textLength="20.00" lengthAdjust="spacingAndGlyphs" xml:space="preserve">0.10</text>
<text x="256.30" y="515" font-size="12.4" fill="#1c1c1c" textLength="37.00" lengthAdjust="spacingAndGlyphs" xml:space="preserve">audusd</text>
<text x="306.30" y="515" font-size="12.4" fill="#1c1c1c" textLength="37.50" lengthAdjust="spacingAndGlyphs" xml:space="preserve">0.75315</text>
<text x="356.30" y="515" font-size="12.4" fill="#1c1c1c" textLength="37.50" lengthAdjust="spacingAndGlyphs" xml:space="preserve">0.00000</text>
<text x="407.00" y="515" font-size="12.4" fill="#1c1c1c" textLength="36.80" lengthAdjust="spacingAndGlyphs" xml:space="preserve">0.00000</text>
<text x="457.00" y="515" font-size="12.4" fill="#1c1c1c" textLength="38.00" lengthAdjust="spacingAndGlyphs" xml:space="preserve">0.75341</text>
<text x="525.00" y="515" font-size="12.4" fill="#1c1c1c" textLength="20.00" lengthAdjust="spacingAndGlyphs" xml:space="preserve">0.00</text>
<text x="585.80" y="515" font-size="12.4" fill="#1c1c1c" textLength="15.50" lengthAdjust="spacingAndGlyphs" xml:space="preserve">-26</text>
<path d="M611.2 508.3L617.8 514.9M617.8 508.3L611.2 514.9" stroke="#939393" stroke-width="1.7"/>
<text x="710.80" y="515" font-size="12.4" fill="#1c1c1c" textLength="68.70" lengthAdjust="spacingAndGlyphs" xml:space="preserve">Renko x timer</text>
<path d="M18.1 525.1999999999999h6.4l3.2 3.2v8.8h-9.6z" fill="#fff" stroke="#5a5a5a" stroke-width="1"/>
<path d="M24.5 525.1999999999999v3.2h3.2" fill="none" stroke="#5a5a5a" stroke-width="0.9"/>
<circle cx="27.5" cy="534.9" r="3.5" fill="#d8381c" stroke="#9c2410" stroke-width="0.6"/>
<circle cx="26.7" cy="533.9" r="1.1" fill="#fff" opacity="0.55"/>
<text x="36.80" y="535" font-size="12.4" fill="#1c1c1c" textLength="37.00" lengthAdjust="spacingAndGlyphs" xml:space="preserve">24573...</text>
<text x="89.50" y="535" font-size="12.4" fill="#1c1c1c" textLength="77.50" lengthAdjust="spacingAndGlyphs" xml:space="preserve">2016.06.23 08:...</text>
<text x="196.50" y="535" font-size="12.4" fill="#1c1c1c" textLength="16.50" lengthAdjust="spacingAndGlyphs" xml:space="preserve">sell</text>
<text x="227.50" y="535" font-size="12.4" fill="#1c1c1c" textLength="20.00" lengthAdjust="spacingAndGlyphs" xml:space="preserve">0.10</text>
<text x="256.30" y="535" font-size="12.4" fill="#1c1c1c" textLength="37.00" lengthAdjust="spacingAndGlyphs" xml:space="preserve">audusd</text>
<text x="306.30" y="535" font-size="12.4" fill="#1c1c1c" textLength="37.50" lengthAdjust="spacingAndGlyphs" xml:space="preserve">0.75323</text>
<text x="356.30" y="535" font-size="12.4" fill="#1c1c1c" textLength="37.50" lengthAdjust="spacingAndGlyphs" xml:space="preserve">0.00000</text>
<text x="407.00" y="535" font-size="12.4" fill="#1c1c1c" textLength="36.80" lengthAdjust="spacingAndGlyphs" xml:space="preserve">0.00000</text>
<text x="457.00" y="535" font-size="12.4" fill="#1c1c1c" textLength="38.00" lengthAdjust="spacingAndGlyphs" xml:space="preserve">0.75341</text>
<text x="525.00" y="535" font-size="12.4" fill="#1c1c1c" textLength="20.00" lengthAdjust="spacingAndGlyphs" xml:space="preserve">0.00</text>
<text x="585.80" y="535" font-size="12.4" fill="#1c1c1c" textLength="15.50" lengthAdjust="spacingAndGlyphs" xml:space="preserve">-18</text>
<path d="M611.2 527.7L617.8 534.3M617.8 527.7L611.2 534.3" stroke="#939393" stroke-width="1.7"/>
<text x="710.80" y="535" font-size="12.4" fill="#1c1c1c" textLength="68.70" lengthAdjust="spacingAndGlyphs" xml:space="preserve">Renko x timer</text>
<rect x="14.5" y="541" width="770" height="11" fill="#d0d0d0"/>
<rect x="17" y="543" width="12" height="9" fill="#fff" stroke="#8a8a8a" stroke-width="0.8"/>
<polygon points="23,545.4 27,550 25,550 25,552 21,552 21,550 19,550" fill="#1faa1f"/>
<text x="36.50" y="553" font-size="11.8" fill="#1c1c1c" font-weight="bold" textLength="142.00" lengthAdjust="spacingAndGlyphs" xml:space="preserve">Balance: 4 656 456.18 USD</text>
<text x="186.00" y="553" font-size="11.8" fill="#1c1c1c" font-weight="bold" textLength="108.00" lengthAdjust="spacingAndGlyphs" xml:space="preserve">Equity: 4 656 462.48</text>
<text x="302.00" y="553" font-size="11.8" fill="#1c1c1c" font-weight="bold" textLength="93.00" lengthAdjust="spacingAndGlyphs" xml:space="preserve">Margin: 3 313.61</text>
<text x="400.00" y="553" font-size="11.8" fill="#1c1c1c" font-weight="bold" textLength="136.00" lengthAdjust="spacingAndGlyphs" xml:space="preserve">Free margin: 4 653 148.87</text>
<text x="544.00" y="553" font-size="11.8" fill="#1c1c1c" font-weight="bold" textLength="137.00" lengthAdjust="spacingAndGlyphs" xml:space="preserve">Margin level: 140525.25%</text>
<text x="575.00" y="553" font-size="11.8" fill="#1c1c1c" font-weight="bold" textLength="25.50" lengthAdjust="spacingAndGlyphs" xml:space="preserve">-0.30</text>
<text transform="translate(11,553) rotate(-90)" font-size="12" fill="#2a2a2a" x="-29.5" y="0">Terminal</text>
</svg>
</body></html>
